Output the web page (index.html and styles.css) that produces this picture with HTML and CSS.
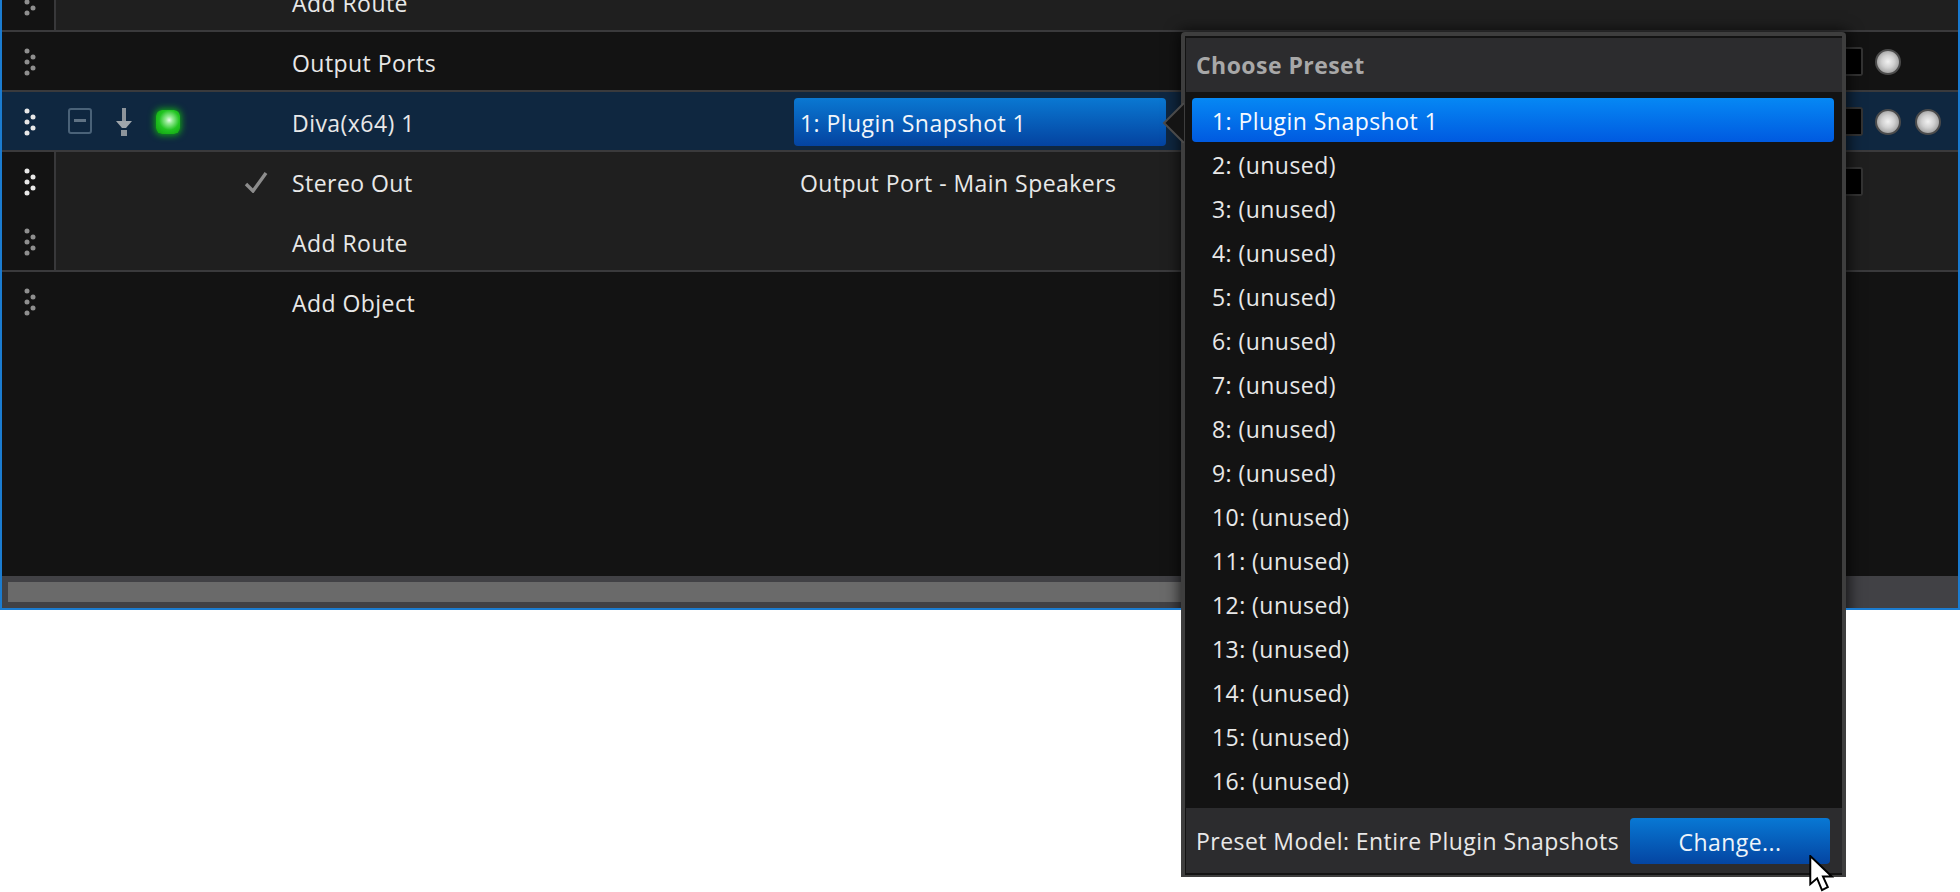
FILE: index.html
```html
<!DOCTYPE html>
<html lang="en">
<head>
<meta charset="utf-8">
<title>Choose Preset</title>
<link rel="stylesheet" href="styles.css">
</head>
<body>
<svg class="defs" width="0" height="0"><defs>
  <g id="grip"><circle cx="3" cy="3" r="2.5"/><circle cx="9" cy="9" r="2.5"/><circle cx="3" cy="14" r="2.5"/><circle cx="9" cy="20" r="2.5"/><circle cx="3" cy="25" r="2.5"/></g>
</defs></svg>
<main class="frame">
  <div class="list">
    <div class="row row-nested row-clipped">
      <div class="grip-cell"><svg class="grip" viewBox="0 0 12 28"><use href="#grip"/></svg></div>
      <div class="icons"></div><div class="name">Add Route</div>
    </div>
    <div class="row row-root">
      <div class="grip-cell"><svg class="grip" viewBox="0 0 12 28"><use href="#grip"/></svg></div>
      <div class="icons"></div><div class="name">Output Ports</div>
      <div class="trail"><span class="box"></span><span class="knob"></span></div>
    </div>
    <div class="row row-selected">
      <div class="grip-cell"><svg class="grip grip-bright" viewBox="0 0 12 28"><use href="#grip"/></svg></div>
      <div class="icons">
        <svg class="ic-minus" viewBox="0 0 24 26"><rect x="1" y="1" width="22" height="24" rx="2" fill="none" stroke="#4a6278" stroke-width="2"/><rect x="6" y="11" width="12" height="3" fill="#5f7284"/></svg>
        <svg class="ic-down" viewBox="0 0 16 28"><rect x="6" y="0" width="4" height="16" fill="#8d949b"/><path d="M0 13h16l-6 7H6z" fill="#a0a6ab"/><rect x="5" y="22" width="6" height="6" fill="#8d949b"/></svg>
        <span class="led"></span>
      </div>
      <div class="name">Diva(x64) 1</div>
      <div class="value value-active">1: Plugin Snapshot 1</div>
      <div class="trail"><span class="box"></span><span class="knob"></span><span class="knob"></span></div>
    </div>
    <div class="nested-group">
      <div class="row row-nested row-first">
        <div class="grip-cell"><svg class="grip grip-bright" viewBox="0 0 12 28"><use href="#grip"/></svg></div>
        <div class="icons icons-end"><svg class="ic-check" viewBox="0 0 24 22"><path d="M2 13l7 7L22 2" fill="none" stroke="#8c8c8c" stroke-width="3.4"/></svg></div>
        <div class="name">Stereo Out</div>
        <div class="value">Output Port - Main Speakers</div>
        <div class="trail"><span class="box"></span></div>
      </div>
      <div class="row row-nested row-last">
        <div class="grip-cell"><svg class="grip" viewBox="0 0 12 28"><use href="#grip"/></svg></div>
        <div class="icons"></div><div class="name">Add Route</div>
      </div>
    </div>
    <div class="row row-root row-open">
      <div class="grip-cell"><svg class="grip" viewBox="0 0 12 28"><use href="#grip"/></svg></div>
      <div class="icons"></div><div class="name">Add Object</div>
    </div>
  </div>
  <div class="scrollbar"><div class="thumb"></div></div>
  <div class="popup-shadow"></div>
</main>

<section class="popup">
  <svg class="pointer" viewBox="0 0 22 40"><path d="M22 0L2 20l20 20" fill="#141414" stroke="#4a4a4a" stroke-width="2"/></svg>
  <header class="popup-head">Choose Preset</header>
  <ul class="items">
    <li class="item item-on">1: Plugin Snapshot 1</li>
    <li class="item">2: (unused)</li>
    <li class="item">3: (unused)</li>
    <li class="item">4: (unused)</li>
    <li class="item">5: (unused)</li>
    <li class="item">6: (unused)</li>
    <li class="item">7: (unused)</li>
    <li class="item">8: (unused)</li>
    <li class="item">9: (unused)</li>
    <li class="item">10: (unused)</li>
    <li class="item">11: (unused)</li>
    <li class="item">12: (unused)</li>
    <li class="item">13: (unused)</li>
    <li class="item">14: (unused)</li>
    <li class="item">15: (unused)</li>
    <li class="item">16: (unused)</li>
  </ul>
  <footer class="popup-foot">
    <span>Preset Model: Entire Plugin Snapshots</span>
    <button class="change" type="button">Change...</button>
  </footer>
</section>
<svg class="cursor" viewBox="0 0 26 38"><path d="M2 1v29l7-6 5 12 6-3-5-11h9z" fill="#fff" stroke="#000" stroke-width="2" stroke-linejoin="miter"/></svg>
</body>
</html>
```
FILE: styles.css
```css
* { box-sizing: border-box; }
html, body { margin: 0; height: 892px; overflow: hidden; background: #fff; }
body { font-family: "Open Sans", "Noto Sans", sans-serif; font-size: 23px; letter-spacing: .45px; color: #e8e8e8; position: relative; }
.defs { position: absolute; }

.frame {
  position: relative; overflow: hidden;
  height: 610px; display: flex; flex-direction: column;
  border: 2px solid #1b7cd0; border-top: 0;
  background: #131313;
}
.list { flex: 1; display: flex; flex-direction: column; min-height: 0; }
.row { height: 60px; flex: none; display: flex; align-items: stretch; border-bottom: 2px solid #3a3a3c; }
.row-clipped { margin-top: -28px; }
.row-root { background: #131313; }
.row-selected { background: #0f2740; }
.row-nested { background: #1f1f1f; }
.row-open { border-bottom: 0; }
.row-first { border-bottom: 0; }

.grip-cell { width: 54px; flex: none; display: flex; align-items: center; padding: 2px 0 0 22px; }
.row-first .grip-cell, .row-open .grip-cell { padding-top: 0; }
.row-nested .grip-cell { background: #131313; border-right: 2px solid #38383a; }
.row-selected .grip-cell, .row-root .grip-cell { border-right: 2px solid transparent; }
.grip { width: 12px; height: 28px; fill: #8f8f8f; }
.grip-bright { fill: #e8e8e8; }

.icons { width: 236px; flex: none; display: flex; align-items: center; padding-left: 12px; }
.icons-end { justify-content: flex-end; padding-right: 24px; }
.ic-minus { width: 24px; height: 26px; margin-right: 24px; }
.ic-down { width: 16px; height: 28px; margin: 1px 24px 0 0; }
.ic-check { width: 24px; height: 22px; }
.led {
  width: 24px; height: 24px; border-radius: 6px; margin-top: 1px;
  background: radial-gradient(circle at 55% 42%, #eafbea 0, #96ea96 18%, #22c422 52%, #0c9a0c 100%);
  box-shadow: 0 0 7px 1px #14b014;
}

.name { width: 502px; flex: none; display: flex; align-items: center; padding-top: 4px; white-space: nowrap; }
.row-first .name, .row-open .name { padding-top: 2px; }
.value { width: 372px; flex: none; margin: 6px 0 4px; padding: 0 6px; display: flex; align-items: center; border-radius: 4px; white-space: nowrap; }
.value-active { background: linear-gradient(#0a78d2, #0443a0); color: #f2f6fa; padding-top: 2px; }

.trail { width: 118px; margin-left: auto; flex: none; display: flex; align-items: center; }
.row-first .trail { padding-bottom: 2px; }
.box { width: 23px; height: 29px; background: #000; border: 2px solid #333; border-left: 0; border-radius: 0 3px 3px 0; margin-right: 12px; flex: none; }
.knob {
  width: 26px; height: 26px; border-radius: 50%; margin: 2px 14px 0 0; flex: none;
  background: radial-gradient(circle at 50% 48%, #f2f2f2 0, #d0d0d0 40%, #999 80%);
  border: 2px solid #4c4c4c;
}

.scrollbar { height: 32px; flex: none; background: #414145; padding: 6px; position: relative; }
.thumb { height: 20px; width: 1240px; background: #6a6a6a; }
.popup-shadow {
  position: absolute; left: 1180px; top: 33px; width: 664px; height: 844px;
  box-shadow: 0 0 14px 2px rgba(0,0,0,.75);
}

.popup {
  position: absolute; left: 1181px; top: 32px; width: 665px; height: 845px;
  display: flex; flex-direction: column;
  background: #131313; border: 4px solid #3e3e3e; border-bottom-width: 2px; border-radius: 4px 4px 0 0;
  padding: 2px 0;
}
.pointer { position: absolute; left: -23px; top: 67px; width: 22px; height: 40px; }
.popup-head { height: 54px; flex: none; display: flex; align-items: center; margin: 0 0 0 1px; padding: 0 10px 0 10px; background: #2c2c2e; color: #a8a8a8; font-weight: 700; }
.items { list-style: none; margin: 6px 0 0; padding: 0 8px 0 7px; flex: 1; }
.item { height: 44px; display: flex; align-items: center; padding: 2px 0 0 20px; white-space: nowrap; border-radius: 4px; }
.item-on { background: linear-gradient(#0688f4, #005ae0); color: #f6faff; }
.popup-foot { height: 65px; flex: none; display: flex; align-items: center; justify-content: space-between; margin-left: 1px; padding: 0 12px 0 10px; background: #2c2c2e; white-space: nowrap; }
.change {
  width: 200px; height: 46px; border: 0; border-radius: 4px;
  background: linear-gradient(#0878d4, #0445a2); color: #eef4fa;
  font: inherit; letter-spacing: inherit; padding: 3px 0 0;
}
.cursor { position: absolute; left: 1808px; top: 855px; width: 26px; height: 37px; }
```
